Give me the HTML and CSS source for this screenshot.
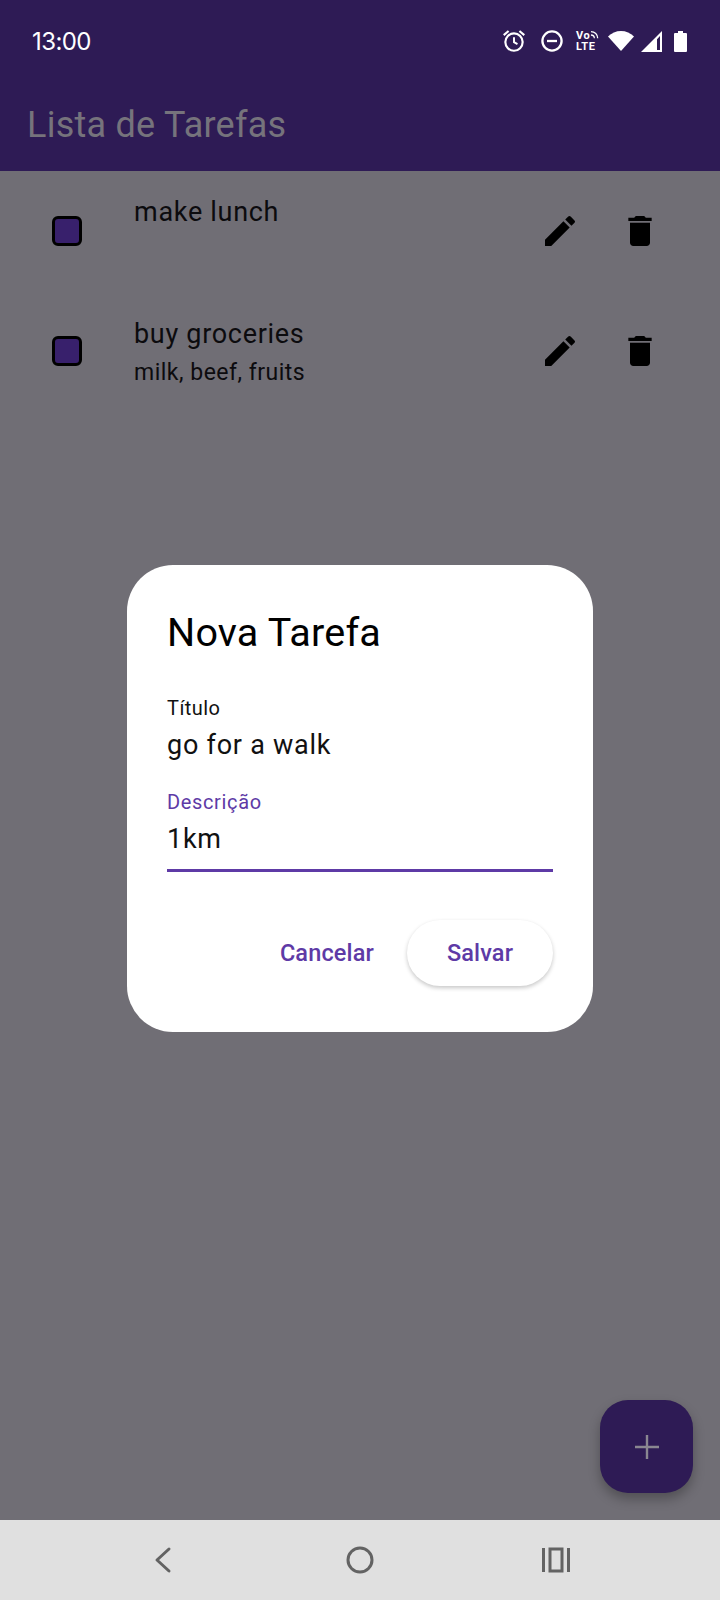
FILE: index.html
```html
<!DOCTYPE html>
<html lang="pt">
<head>
<meta charset="utf-8">
<title>Lista de Tarefas</title>
<link rel="stylesheet" href="styles.css">
</head>
<body>
<div class="phone">
  <header class="top">
    <div class="status">
      <span class="clock">13:00</span>
      <div class="status-icons">
        <svg class="si-alarm" viewBox="0 0 24 24" width="26" height="26" fill="none" stroke="#fff" stroke-width="2"><circle cx="12" cy="13" r="8"/><path d="M12 8.500V13l3.200 1.800" stroke-width="1.800"/><path d="M2.500 6.500 7 2.800M21.500 6.500 17 2.800"/></svg>
        <svg class="si-dnd" viewBox="0 0 24 24" width="24" height="24" fill="none" stroke="#fff" stroke-width="2.300"><circle cx="12" cy="12" r="9.600"/><path d="M7 12h10"/></svg>
        <span class="volte"><span class="vo">Vo<svg viewBox="0 0 10 10" width="10" height="10" fill="none" stroke="#fff" stroke-width="1.300"><path d="M1 1.500c4 0 7 3 7 7M1 5c2 0 3.500 1.500 3.500 3.500"/></svg></span><span class="lte">LTE</span></span>
        <svg class="si-wifi" viewBox="0 0 26 20" width="26" height="20"><path d="M13 20 0 5.500C3.500 2 8 0 13 0s9.500 2 13 5.500z" fill="#fff"/></svg>
        <svg class="si-signal" viewBox="0 0 21 21" width="21" height="21"><path d="M21 0v21H0zM19 5l-3 3.200V19h3z" fill="#fff" fill-rule="evenodd"/></svg>
        <svg class="si-batt" viewBox="0 0 13 21" width="13" height="21"><path d="M4 0h5v2h3a1 1 0 0 1 1 1v17a1 1 0 0 1-1 1H1a1 1 0 0 1-1-1V3a1 1 0 0 1 1-1h3z" fill="#fff"/></svg>
      </div>
    </div>
    <h1 class="app-title">Lista de Tarefas</h1>
  </header>

  <main class="list">
    <div class="row row-first">
      <span class="check"></span>
      <div class="texts texts-top"><div class="task">make lunch</div></div>
      <svg class="act act-edit" viewBox="0 0 24 24" width="40" height="40"><path d="M3 17.250V21h3.750L17.810 9.940l-3.750-3.750L3 17.250zM20.710 7.040a1 1 0 0 0 0-1.410l-2.340-2.340a1 1 0 0 0-1.410 0l-1.830 1.830 3.750 3.750 1.830-1.830z"/></svg>
      <svg class="act act-del" viewBox="0 0 24 24" width="40" height="40"><path d="M6 19c0 1.100.9 2 2 2h8c1.100 0 2-.9 2-2V7H6v12zM19 4h-3.500l-1-1h-5l-1 1H5v2h14V4z"/></svg>
    </div>
    <div class="row">
      <span class="check"></span>
      <div class="texts">
        <div class="task">buy groceries</div>
        <div class="desc">milk, beef, fruits</div>
      </div>
      <svg class="act act-edit" viewBox="0 0 24 24" width="40" height="40"><path d="M3 17.250V21h3.750L17.810 9.940l-3.750-3.750L3 17.250zM20.710 7.040a1 1 0 0 0 0-1.410l-2.340-2.340a1 1 0 0 0-1.410 0l-1.830 1.830 3.750 3.750 1.830-1.830z"/></svg>
      <svg class="act act-del" viewBox="0 0 24 24" width="40" height="40"><path d="M6 19c0 1.100.9 2 2 2h8c1.100 0 2-.9 2-2V7H6v12zM19 4h-3.500l-1-1h-5l-1 1H5v2h14V4z"/></svg>
    </div>
  </main>

  <nav class="navbar">
    <svg viewBox="0 0 24 30" width="24" height="30" fill="none" stroke="#636363" stroke-width="3" stroke-linecap="round" stroke-linejoin="round"><path d="M18 4 6 15l12 11"/></svg>
    <svg viewBox="0 0 28 28" width="28" height="28" fill="none" stroke="#636363" stroke-width="3"><circle cx="14" cy="14" r="12"/></svg>
    <svg viewBox="0 0 28 26" width="28" height="26" fill="none" stroke="#636363" stroke-width="3"><path d="M1.500 1v24M26.500 1v24"/><rect x="8" y="2" width="12" height="22"/></svg>
  </nav>

  <button class="fab" type="button"><svg viewBox="0 0 24 24" width="24" height="24" fill="none" stroke="#8a8791" stroke-width="2.400"><path d="M12 0v24M0 12h24"/></svg></button>

  <section class="dialog">
    <h2 class="d-title">Nova Tarefa</h2>
    <label class="f-label">Título</label>
    <div class="f-value">go for a walk</div>
    <label class="f-label f-active">Descrição</label>
    <div class="f-value f-value-active">1km</div>
    <div class="d-actions">
      <button class="btn btn-text" type="button">Cancelar</button>
      <button class="btn btn-raised" type="button">Salvar</button>
    </div>
  </section>
</div>
</body>
</html>
```
FILE: styles.css
```css
* { box-sizing: border-box; }
html, body { margin: 0; padding: 0; }
body { width: 720px; height: 1600px; overflow: hidden; font-family: Roboto, "Liberation Sans", sans-serif; }
.phone { position: relative; width: 720px; height: 1600px; display: flex; flex-direction: column; background: #706e75; }

.top { height: 171px; background: #2e1b55; flex: none; }
.status { height: 82px; display: flex; align-items: center; justify-content: space-between; padding: 0 33px 0 32px; }
.clock { font-family: Inter, "Open Sans", sans-serif; font-size: 24px; color: #fff; letter-spacing: -0.6px; }
.status-icons { display: flex; align-items: center; }
.si-alarm { margin-right: 13px; }
.si-dnd { margin-right: 12px; }
.volte { display: flex; flex-direction: column; width: 24px; margin-right: 8px; color: #fff; font-family: Roboto, sans-serif; font-weight: 700; font-size: 11px; line-height: 11px; letter-spacing: .6px; }
.vo { display: flex; align-items: flex-start; }
.si-wifi { margin-right: 7px; }
.si-signal { margin-right: 12px; }

.app-title { margin: 0; padding-left: 27px; padding-top: 23px; font-size: 36px; font-weight: 400; line-height: 40px; color: #76737c; letter-spacing: .25px; }

.list { flex: 1; display: flex; flex-direction: column; padding-top: 2px; }
.row { display: flex; align-items: center; height: 120px; padding-left: 52px; }
.row-first { height: 116px; margin-bottom: 2px; }
.check { width: 30px; height: 30px; border: 3.500px solid #000; border-radius: 6px; background: #38206c; flex: none; }
.texts { width: 407px; margin-left: 52px; padding-top: 2px; color: #0c0b0e; }
.texts-top { align-self: flex-start; padding-top: 22px; }
.task { font-size: 27px; line-height: 34px; letter-spacing: .7px; }
.desc { font-size: 23px; line-height: 30px; letter-spacing: .5px; margin-top: 7px; }
.act { flex: none; fill: #000; }
.act-edit { margin-left: -1px; }
.act-del { margin-left: 40px; }

.navbar { height: 80px; flex: none; background: #e0e0e0; display: flex; align-items: center; justify-content: center; }
.navbar svg:nth-child(1) { margin-right: 171px; }
.navbar svg:nth-child(2) { margin-right: 168px; }

.fab { position: absolute; left: 600px; top: 1400px; width: 93px; height: 93px; border: 0; border-radius: 28px; background: #2e1b55; box-shadow: 0 6px 12px rgba(0,0,0,.28); display: flex; align-items: center; justify-content: center; padding: 0; }

.dialog { position: absolute; left: 127px; top: 565px; width: 466px; height: 467px; background: #fff; border-radius: 46px; padding: 44px 40px 0; }
.d-title { margin: 0; font-size: 39.500px; font-weight: 400; line-height: 48px; color: #000; letter-spacing: .2px; }
.f-label { display: block; font-size: 20px; line-height: 24px; color: #111; letter-spacing: .45px; }
.d-title + .f-label { margin-top: 39px; }
.f-active { color: #5e3aa6; letter-spacing: .65px; }
.f-value { font-size: 27px; line-height: 36px; color: #111; letter-spacing: .75px; margin-top: 7px; margin-bottom: 27px; }
.f-value-active { margin-top: 7px; margin-bottom: 0; padding-bottom: 12px; border-bottom: 3px solid #5e3aa6; }
.d-actions { display: flex; justify-content: flex-end; align-items: center; margin-top: 48px; }
.btn { font-family: Roboto, sans-serif; font-size: 23.500px; font-weight: 500; color: #5e3aa6; background: #fff; border: 0; padding: 0; letter-spacing: .15px; }
.btn-text { margin-right: 33px; }
.btn-raised { width: 146px; height: 66px; border-radius: 33px; box-shadow: 0 2px 4px rgba(0,0,0,.22); }
```
